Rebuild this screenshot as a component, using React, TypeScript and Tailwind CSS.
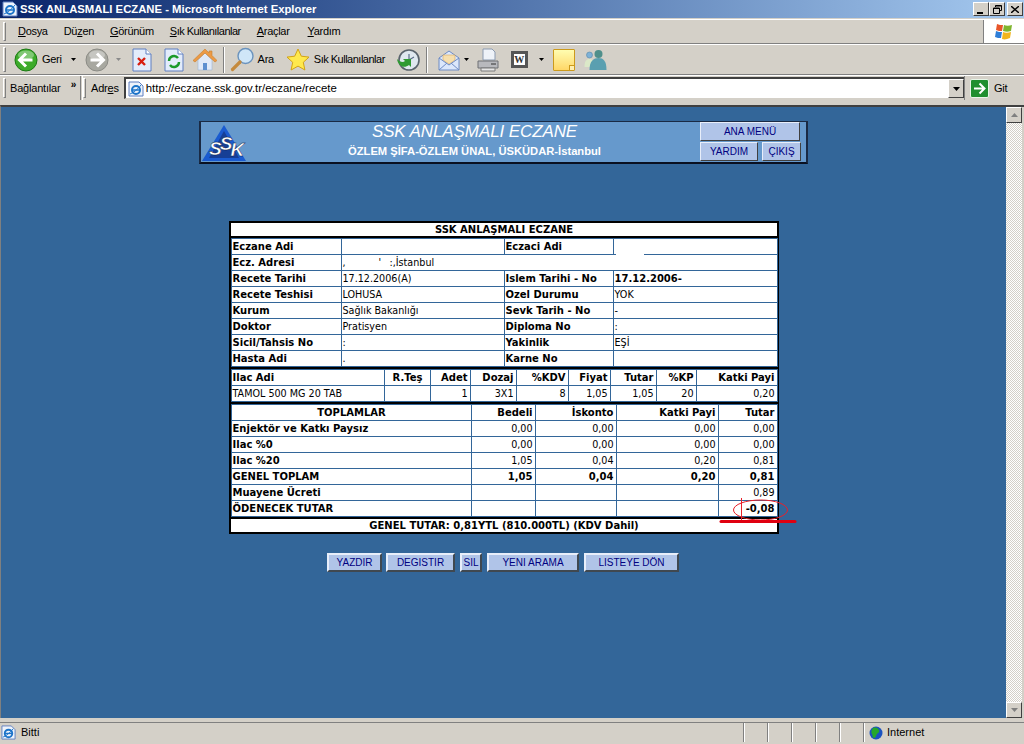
import React from 'react';

const face = 'border border-t-white border-l-white border-r-[#404040] border-b-[#404040]';

const Grip = () => <div className="w-[3px] self-stretch my-[2px] border border-t-white border-l-white border-r-[#808080] border-b-[#808080]" />;
const Sep = () => <div className="w-[2px] h-[26px] ml-[6px] mr-[3px] border-l border-l-[#808080] border-r border-r-white" />;
const Caret = ({ dim }: { dim?: boolean }) => (
    <svg width="5" height="3" viewBox="0 0 5 3" className="mx-[4px]"><path d="M0 0h5L2.5 3z" fill={dim ? '#8a8a8a' : '#000'} /></svg>
);

const Round = ({ fill, dark, flip }: { fill: string; dark: string; flip?: boolean }) => (
    <svg width="24" height="24" viewBox="0 0 24 24" className={flip ? 'scale-x-[-1]' : ''}>
        <circle cx="12" cy="12" r="11" fill={fill} stroke={dark} />
        <ellipse cx="12" cy="7" rx="8" ry="4.5" fill="#fff" opacity=".35" />
        <path d="M12 5.5 5.5 12l6.5 6.5M6 12h12.5" fill="none" stroke="#fff" strokeWidth="3" />
    </svg>
);

const PageIcon = ({ children }: { children: React.ReactNode }) => (
    <svg width="20" height="24" viewBox="0 0 20 24">
        <path d="M1 1h13l5 5v17H1z" fill="#e3ecfb" stroke="#5f7fc0" />
        <path d="M14 1v5h5" fill="#fff" stroke="#5f7fc0" />
        {children}
    </svg>
);

const IeIcon = ({ size = 16 }: { size?: number }) => (
    <svg width={size} height={size} viewBox="0 0 16 16">
        <path d="M1 1h10l4 4v10H1z" fill="#eef3fb" stroke="#5f7fc0" />
        <circle cx="8" cy="9" r="4" fill="none" stroke="#1d74c9" strokeWidth="2" />
        <path d="M4 9h8" stroke="#1d74c9" strokeWidth="1.5" />
        <path d="M2 13c3-1 8-5 11-9" fill="none" stroke="#1d74c9" />
    </svg>
);

const Toolbar = () => (
    <div className="h-[31px] flex items-center pl-[3px] border-t border-t-white border-b border-b-[#808080] font-['Liberation_Sans',sans-serif] text-[11px] text-black tracking-[-0.3px]">
        <Grip />
        <div className="flex items-center pl-[8px]">
            <Round fill="#3dab2a" dark="#1c7a14" />
            <span className="ml-[4px] mr-[5px]">Geri</span>
            <Caret />
            <div className="ml-[5px]"><Round fill="#a8a8a0" dark="#8b8b85" flip /></div>
            <div className="ml-[3px]"><Caret dim /></div>
            <div className="ml-[7px]">
                <PageIcon><path d="M6 10l7 7M13 10l-7 7" stroke="#d81e10" strokeWidth="2.4" /></PageIcon>
            </div>
            <div className="ml-[12px]">
                <PageIcon>
                    <path d="M5 13a5 5 0 0 1 9-3" fill="none" stroke="#1b9a2b" strokeWidth="2.4" />
                    <path d="M15 14a5 5 0 0 1-9 3" fill="none" stroke="#1b9a2b" strokeWidth="2.4" />
                </PageIcon>
            </div>
            <div className="ml-[9px]">
                <svg width="24" height="24" viewBox="0 0 24 24">
                    <path d="M5 12 12 5l7 7v10H5z" fill="#dfe9f8" stroke="#9fb5d5" strokeWidth=".6" />
                    <path d="M12 1 0 12.5l2 1.5L12 5l10 9 2-1.5-5-5V3h-3v2z" fill="#ec9a45" stroke="#c7802f" strokeWidth=".6" />
                    <path d="M10 15h4v7h-4z" fill="#5d8fcf" />
                </svg>
            </div>
            <Sep />
            <div className="ml-[2px]">
                <svg width="25" height="25" viewBox="0 0 25 25">
                    <circle cx="15.5" cy="9" r="7.5" fill="#cfe6f8" stroke="#6b93bd" strokeWidth="1.4" />
                    <path d="M10 15 2.5 22.5" stroke="#c58a3d" strokeWidth="3.2" strokeLinecap="round" />
                </svg>
            </div>
            <span className="ml-[3px] mr-[12px]">Ara</span>
            <svg width="24" height="24" viewBox="0 0 24 24">
                <path d="m12 1 3.3 7.2 7.7.9-5.7 5.2 1.6 7.7L12 18.1 5.1 22l1.6-7.7L1 9.1l7.7-.9z" fill="#ffe94d" stroke="#d3a316" />
            </svg>
            <span className="ml-[4px] mr-[11px] tracking-[-0.5px]">Sık Kullanılanlar</span>
            <svg width="24" height="24" viewBox="0 0 24 24">
                <circle cx="13" cy="12" r="10" fill="#dfe8ef" stroke="#59636c" strokeWidth="1.6" />
                <path d="M13 6v6l5-3" fill="none" stroke="#5a6f88" strokeWidth="1.2" />
                <path d="M1 11c1 7 7 10 12 6l2 2v-8h-8l2 2c-2 2-5 1-8-2z" fill="#2f9a33" />
            </svg>
            <Sep />
            <div className="ml-[7px]">
                <svg width="22" height="22" viewBox="0 0 22 22">
                    <path d="M1 9 11 2l10 7v12H1z" fill="#dbe7fb" stroke="#6f8cc4" />
                    <path d="M5 11V6h12v5l-6 4z" fill="#f6dfae" stroke="#d8a95e" strokeWidth=".6" />
                    <path d="m1 9 10 7 10-7M1 21l8-7M21 21l-8-7" fill="none" stroke="#6f8cc4" />
                </svg>
            </div>
            <Caret />
            <div className="ml-[3px]">
                <svg width="24" height="24" viewBox="0 0 24 24">
                    <path d="M7 1h9l3 3v8H7z" fill="#eef2f8" stroke="#8b9ab0" />
                    <path d="M2 13h20v7H2z" fill="#b8b9bd" stroke="#6f7075" />
                    <path d="M5 20h14v3H5z" fill="#e6e6e6" stroke="#7b7b7b" />
                    <path d="M15 16h5" stroke="#333" />
                </svg>
            </div>
            <div className="ml-[11px] w-[17px] h-[17px] border-[3px] border-[#555] bg-white flex items-center justify-center font-['Liberation_Serif',serif] font-bold text-[10px] leading-none text-[#333] tracking-normal">W</div>
            <div className="ml-[7px]"><Caret /></div>
            <div className="ml-[5px] relative w-[22px] h-[22px] rounded-[1px] border border-[#cc9a1c] bg-gradient-to-b from-[#fffdb0] to-[#ffd767]">
                <div className="absolute right-0 bottom-0 w-[5px] h-[5px] bg-[#ffefb0] border-t border-l border-[#cc9a1c]" />
            </div>
            <div className="ml-[7px]">
                <svg width="25" height="24" viewBox="0 0 24 24">
                    <circle cx="7" cy="7" r="3" fill="#7fb2d8" stroke="#4a7f9f" strokeWidth=".5" />
                    <path d="M2 19c0-6 2-8 5-8s4 2 4 8z" fill="#dbe8c8" />
                    <circle cx="16" cy="6" r="4" fill="#4f8f8b" />
                    <path d="M7 22c0-9 4-12 9-12s8 3 8 12z" fill="#5a9fb0" />
                </svg>
            </div>
        </div>
    </div>
);

const MenuBar = () => (
    <div className="h-[25px] mt-[1px] flex items-stretch pl-[3px] border-t border-t-white border-b border-b-[#808080]">
        <Grip />
        <div className="flex-1 flex items-center pl-[12px] gap-[16px] font-['Liberation_Sans',sans-serif] text-[11px] tracking-[-0.3px] text-black">
            <span><u>D</u>osya</span>
            <span>Dü<u>z</u>en</span>
            <span><u>G</u>örünüm</span>
            <span className="tracking-[-0.5px]"><u>S</u>ık Kullanılanlar</span>
            <span><u>A</u>raçlar</span>
            <span className="ml-[2px]"><u>Y</u>ardım</span>
        </div>
        <div className="w-[41px] bg-white border-l border-l-[#808080] flex items-center justify-center">
            <svg width="20" height="18" viewBox="0 0 20 18">
                <path d="M3 1c2 1 4 1 6 1L8 8C6 8 4 8 2 7z" fill="#e8562a" />
                <path d="M10 2c2 1 5 1 8 0l-1 6c-3 1-5 1-8 0z" fill="#7fb52e" />
                <path d="M2 8c2 1 4 1 6 1l-1 6c-2 0-4 0-6-1z" fill="#2f7ed8" />
                <path d="M9 9c2 1 5 1 8 0l-1 6c-3 1-5 2-8 1z" fill="#f2b51d" />
            </svg>
        </div>
    </div>
);

const AddressBar = () => (
    <div className="h-[25px] flex items-stretch pl-[3px] font-['Liberation_Sans',sans-serif] text-[11px] tracking-[-0.2px] text-black border-t border-t-white">
        <Grip />
        <div className="w-[75px] flex items-center pl-[4px] border-r border-r-[#808080] relative">
            <span>Bağlantılar</span>
            <span className="absolute right-[4px] top-[1px] text-[10px] font-bold leading-[16px]">»</span>
        </div>
        <div className="ml-[1px] border-l border-l-white" />
        <Grip />
        <span className="self-center ml-[5px] mr-[5px]">Adr<u>e</u>s</span>
        <div className="flex-1 my-[1px] flex items-center border-t-2 border-l-2 border-t-[#404040] border-l-[#404040] border-b border-b-[#d4d0c8] bg-white pl-[2px]">
            <IeIcon />
            <span className="ml-[2px] text-[11.4px] flex-1 tracking-normal">http://eczane.ssk.gov.tr/eczane/recete</span>
            <div className={`w-[16px] h-[19px] bg-[#d4d0c8] ${face} flex items-center justify-center`}>
                <svg width="7" height="4" viewBox="0 0 7 4"><path d="M0 0h7L3.5 4z" fill="#000" /></svg>
            </div>
        </div>
        <div className="w-[60px] flex items-center pl-[5px] border-l border-l-[#808080]">
            <div className="w-[19px] h-[19px] rounded-[2px] bg-[#1f8f2f] flex items-center justify-center border border-[#e8f5e8]">
                <svg width="13" height="13" viewBox="0 0 13 13"><path d="M6.5 1.5 11.5 6.5l-5 5M1 6.5h10" fill="none" stroke="#fff" strokeWidth="2" /></svg>
            </div>
            <span className="ml-[5px]">Git</span>
        </div>
    </div>
);

const HeaderBtn = ({ label, className }: { label: string; className: string }) => (
    <div className={`h-[19px] bg-[#b0c4e8] border border-t-[#e8eefa] border-l-[#e8eefa] border-r-[#404040] border-b-[#404040] flex items-center justify-center text-[#000080] text-[10px] ${className}`}>{label}</div>
);

const PageHeader = () => (
    <div className="self-center w-[609px] h-[43px] mt-[14px] bg-[#6699cc] border-t border-t-[#1a2a44] border-l-2 border-l-[#1a2a44] border-b-2 border-b-[#0a1020] border-r-2 border-r-[#1a2a44] flex font-['Liberation_Sans',sans-serif]">
        <div className="w-[48px] flex items-end pl-[1px] pb-[1px]">
            <svg width="44" height="36" viewBox="0 0 44 36" className="overflow-visible">
                <path d="M22 0 44 36H0z" fill="#1a5bd0" />
                <path d="M22 6 37 33H7z" fill="#163f96" />
                <text x="7" y="30" fontFamily="Liberation Sans" fontWeight="700" fontStyle="italic" fontSize="19" fill="#fff" stroke="#0a1a40" strokeWidth=".4" letterSpacing="-2">
                    S<tspan dy="-5">S</tspan><tspan dy="6">K</tspan>
                </text>
            </svg>
        </div>
        <div className="w-[451px] flex flex-col items-center text-white">
            <div className="italic text-[17px] leading-[20px] tracking-[-0.1px]">SSK ANLAŞMALI ECZANE</div>
            <div className="font-bold text-[11.2px] leading-[14px] mt-[2px]">ÖZLEM ŞİFA-ÖZLEM ÜNAL, ÜSKÜDAR-İstanbul</div>
        </div>
        <div className="w-[102px] flex flex-col gap-[1px]">
            <HeaderBtn label="ANA MENÜ" className="w-[100px]" />
            <div className="flex gap-[4px]">
                <HeaderBtn label="YARDIM" className="w-[58px]" />
                <HeaderBtn label="ÇIKIŞ" className="w-[39px]" />
            </div>
        </div>
    </div>
);

type Align = 'l' | 'r' | 'c';

const Td = ({ children, w, b, a = 'l', colSpan }: { children?: React.ReactNode; w?: string; b?: boolean; a?: Align; colSpan?: number }) => (
    <td
        colSpan={colSpan}
        className={`h-[16px] p-0 pl-[1px] border border-[#336699] overflow-hidden whitespace-nowrap leading-[14px] ${w ?? ''} ${b ? 'font-bold' : 'text-[9.6px]'} ${a === 'r' ? 'text-right pr-[2px]' : a === 'c' ? 'text-center' : 'text-left'}`}
    >
        {children}
    </td>
);

const infoRows: [string, string, string, string, boolean?][] = [
    ['Recete Tarihi', '17.12.2006(A)', 'Islem Tarihi - No', '17.12.2006-', true],
    ['Recete Teshisi', 'LOHUSA', 'Ozel Durumu', 'YOK'],
    ['Kurum', 'Sağlık Bakanlığı', 'Sevk Tarih - No', '-'],
    ['Doktor', 'Pratisyen', 'Diploma No', ':'],
    ['Sicil/Tahsis No', ':', 'Yakinlik', 'EŞİ'],
    ['Hasta Adi', '.', 'Karne No', ''],
];

const InfoTable = () => (
    <table className="w-[546px] table-fixed border-collapse">
        <tbody>
            <tr>
                <Td w="w-[110px]" b>Eczane Adi</Td>
                <Td w="w-[163px]"></Td>
                <Td w="w-[109px]" b>Eczaci Adi</Td>
                <Td w="w-[164px]"></Td>
            </tr>
            <tr>
                <Td b>Ecz. Adresi</Td>
                <Td colSpan={3}>
                    <span className="inline-block w-[36px]">,</span>
                    <span className="inline-block w-[11px]">'</span>
                    :,İstanbul
                </Td>
            </tr>
            {infoRows.map(([a, b, c, d, bold]) => (
                <tr key={a}>
                    <Td b>{a}</Td>
                    <Td>{b}</Td>
                    <Td b>{c}</Td>
                    <Td b={bold}>{d}</Td>
                </tr>
            ))}
        </tbody>
    </table>
);

const DrugTable = () => (
    <table className="w-[546px] table-fixed border-collapse">
        <tbody>
            <tr>
                <Td w="w-[153px]" b>Ilac Adi</Td>
                <Td w="w-[46px]" b a="c">R.Teş</Td>
                <Td w="w-[40px]" b a="r">Adet</Td>
                <Td w="w-[46px]" b a="r">Dozaj</Td>
                <Td w="w-[52px]" b a="r">%KDV</Td>
                <Td w="w-[42px]" b a="r">Fiyat</Td>
                <Td w="w-[46px]" b a="r">Tutar</Td>
                <Td w="w-[40px]" b a="r">%KP</Td>
                <Td w="w-[81px]" b a="r">Katki Payi</Td>
            </tr>
            <tr>
                <Td>TAMOL 500 MG 20 TAB</Td>
                <Td></Td>
                <Td a="r">1</Td>
                <Td a="r">3X1</Td>
                <Td a="r">8</Td>
                <Td a="r">1,05</Td>
                <Td a="r">1,05</Td>
                <Td a="r">20</Td>
                <Td a="r">0,20</Td>
            </tr>
        </tbody>
    </table>
);

const totals: [string, string, string, string, string, boolean?][] = [
    ['Enjektör ve Katkı Paysız', '0,00', '0,00', '0,00', '0,00'],
    ['Ilac %0', '0,00', '0,00', '0,00', '0,00'],
    ['Ilac %20', '1,05', '0,04', '0,20', '0,81'],
    ['GENEL TOPLAM', '1,05', '0,04', '0,20', '0,81', true],
];

const TotalsTable = () => (
    <table className="w-[546px] table-fixed border-collapse">
        <tbody>
            <tr>
                <Td w="w-[240px]" b a="c">TOPLAMLAR</Td>
                <Td w="w-[64px]" b a="r">Bedeli</Td>
                <Td w="w-[81px]" b a="r">İskonto</Td>
                <Td w="w-[102px]" b a="r">Katki Payi</Td>
                <Td w="w-[59px]" b a="r">Tutar</Td>
            </tr>
            {totals.map(([n, a, b, c, d, bold]) => (
                <tr key={n}>
                    <Td b>{n}</Td>
                    <Td a="r" b={bold}>{a}</Td>
                    <Td a="r" b={bold}>{b}</Td>
                    <Td a="r" b={bold}>{c}</Td>
                    <Td a="r" b={bold}>{d}</Td>
                </tr>
            ))}
            <tr>
                <Td b>Muayene Ücreti</Td>
                <Td></Td>
                <Td></Td>
                <Td></Td>
                <Td a="r">0,89</Td>
            </tr>
            <tr>
                <Td b>ÖDENECEK TUTAR</Td>
                <Td></Td>
                <Td></Td>
                <Td></Td>
                <Td a="r" b>-0,08</Td>
            </tr>
        </tbody>
    </table>
);

const Recete = () => (
    <div className="relative self-center ml-[1px] w-[550px] mt-[57px] bg-white border-2 border-black font-['DejaVu_Sans',sans-serif] text-[10px] text-black">
        <div className="h-[13px] text-center font-bold leading-[13px]">SSK ANLAŞMALI ECZANE</div>
        <div className="bg-black py-[2px] flex flex-col gap-[2px] items-center">
            <div className="bg-white"><InfoTable /></div>
            <div className="bg-white"><DrugTable /></div>
            <div className="bg-white"><TotalsTable /></div>
        </div>
        <div className="h-[13px] text-center font-bold leading-[13px]">GENEL TUTAR: 0,81YTL (810.000TL) (KDV Dahil)</div>
        {/* whited-out patch on the line under the pharmacist name */}
        <div className="absolute left-[385px] top-[30px] w-[28px] h-[2px] bg-white" />
        {/* red marks drawn over the total */}
        <svg className="absolute left-[487px] top-[273px]" width="80" height="28" viewBox="0 0 80 28">
            <ellipse cx="42.5" cy="14" rx="27" ry="10" fill="none" stroke="#e8202a" />
            <path d="M23.5 2v22" stroke="#e8202a" />
            <path d="M3 25.5h74" stroke="#e00010" strokeWidth="3" strokeLinecap="round" />
        </svg>
    </div>
);

const FormBtn = ({ label, w }: { label: string; w: string }) => (
    <div className={`${w} h-[19px] bg-[#b0c4e8] border-2 border-t-[#e8eefa] border-l-[#e8eefa] border-r-[#404850] border-b-[#404850] flex items-center justify-center text-[#000080] text-[10px] font-['Liberation_Sans',sans-serif]`}>{label}</div>
);

const ScrollArrow = ({ up }: { up?: boolean }) => (
    <div className={`w-[16px] h-[16px] bg-[#d4d0c8] ${face} flex items-center justify-center`}>
        <svg width="7" height="4" viewBox="0 0 7 4" className={up ? 'rotate-180' : ''}><path d="M0 0h7L3.5 4z" fill="#808080" /></svg>
    </div>
);

const StatusBar = () => (
    <div className="h-[20px] flex items-stretch font-['Liberation_Sans',sans-serif] text-[11px] text-black border-t border-t-[#808080] mt-[4px] shrink-0">
        <div className="flex-1 flex items-center pl-[1px] border-r border-r-[#808080]">
            <IeIcon size={15} />
            <span className="ml-[5px]">Bitti</span>
        </div>
        {[0, 1, 2, 3, 4].map(i => (
            <div key={i} className="w-[24px] border-l border-l-white border-r border-r-[#808080]" />
        ))}
        <div className="w-[160px] flex items-center pl-[4px] border-l border-l-white">
            <svg width="14" height="16" viewBox="0 0 14 16">
                <circle cx="7" cy="8" r="6.5" fill="#1a52c0" />
                <path d="M4 3c3-1 5 0 6 2s-1 3-2 4-1 4-3 4-1-3-2-4-1-4 1-6z" fill="#25a82a" />
            </svg>
            <span className="ml-[4px]">Internet</span>
        </div>
    </div>
);

export default function App() {
    return (
        <div className="w-[1024px] h-[744px] overflow-hidden bg-[#d4d0c8] flex flex-col">
            {/* window caption */}
            <div className="h-[18px] flex items-center bg-gradient-to-r from-[#0a246a] to-[#a6caf0] text-white font-bold text-[11.3px] font-['Liberation_Sans',sans-serif] pl-[2px] pr-[1px] shrink-0">
                <IeIcon />
                <span className="ml-[2px] flex-1">SSK ANLASMALI ECZANE - Microsoft Internet Explorer</span>
                <div className="flex">
                    {['min', 'max', 'close'].map(k => (
                        <div key={k} className={`w-[16px] h-[14px] bg-[#d4d0c8] ${face} flex items-center justify-center ${k === 'close' ? 'ml-[2px]' : ''}`}>
                            {k === 'min' && <div className="w-[6px] h-[2px] bg-black mt-[7px] mr-[2px]" />}
                            {k === 'max' && (
                                <svg width="9" height="9" viewBox="0 0 9 9"><path d="M2.5 2V.5h6v5H7M.5 3h6v5.5h-6z" fill="none" stroke="#000" /><path d="M.5 3.5h6M2.5 1h6" stroke="#000" /></svg>
                            )}
                            {k === 'close' && (
                                <svg width="8" height="7" viewBox="0 0 8 7"><path d="M0 0l8 7M8 0 0 7" stroke="#000" strokeWidth="1.4" /></svg>
                            )}
                        </div>
                    ))}
                </div>
            </div>
            <MenuBar />
            <Toolbar />
            <AddressBar />
            {/* page area */}
            <div className="h-[613px] mt-[5px] flex border-t-2 border-t-[#404040] border-l border-l-[#808080] shrink-0">
                <div className="flex-1 flex flex-col min-w-0 bg-[#336699]">
                    <PageHeader />
                    <Recete />
                    <div className="flex justify-center gap-[5px] mt-[19px] pr-[1px]">
                        <FormBtn label="YAZDIR" w="w-[55px] mr-[-1px]" />
                        <FormBtn label="DEGISTIR" w="w-[69px]" />
                        <FormBtn label="SIL" w="w-[22px]" />
                        <FormBtn label="YENI ARAMA" w="w-[92px]" />
                        <FormBtn label="LISTEYE DÖN" w="w-[95px]" />
                    </div>
                </div>
                <div className="w-[16px] mr-[2px] flex flex-col justify-between bg-[repeating-conic-gradient(#d4d0c8_0_25%,#ffffff_0_50%)] bg-[length:2px_2px]">
                    <ScrollArrow up />
                    <ScrollArrow />
                </div>
            </div>
            <StatusBar />
        </div>
    );
}
